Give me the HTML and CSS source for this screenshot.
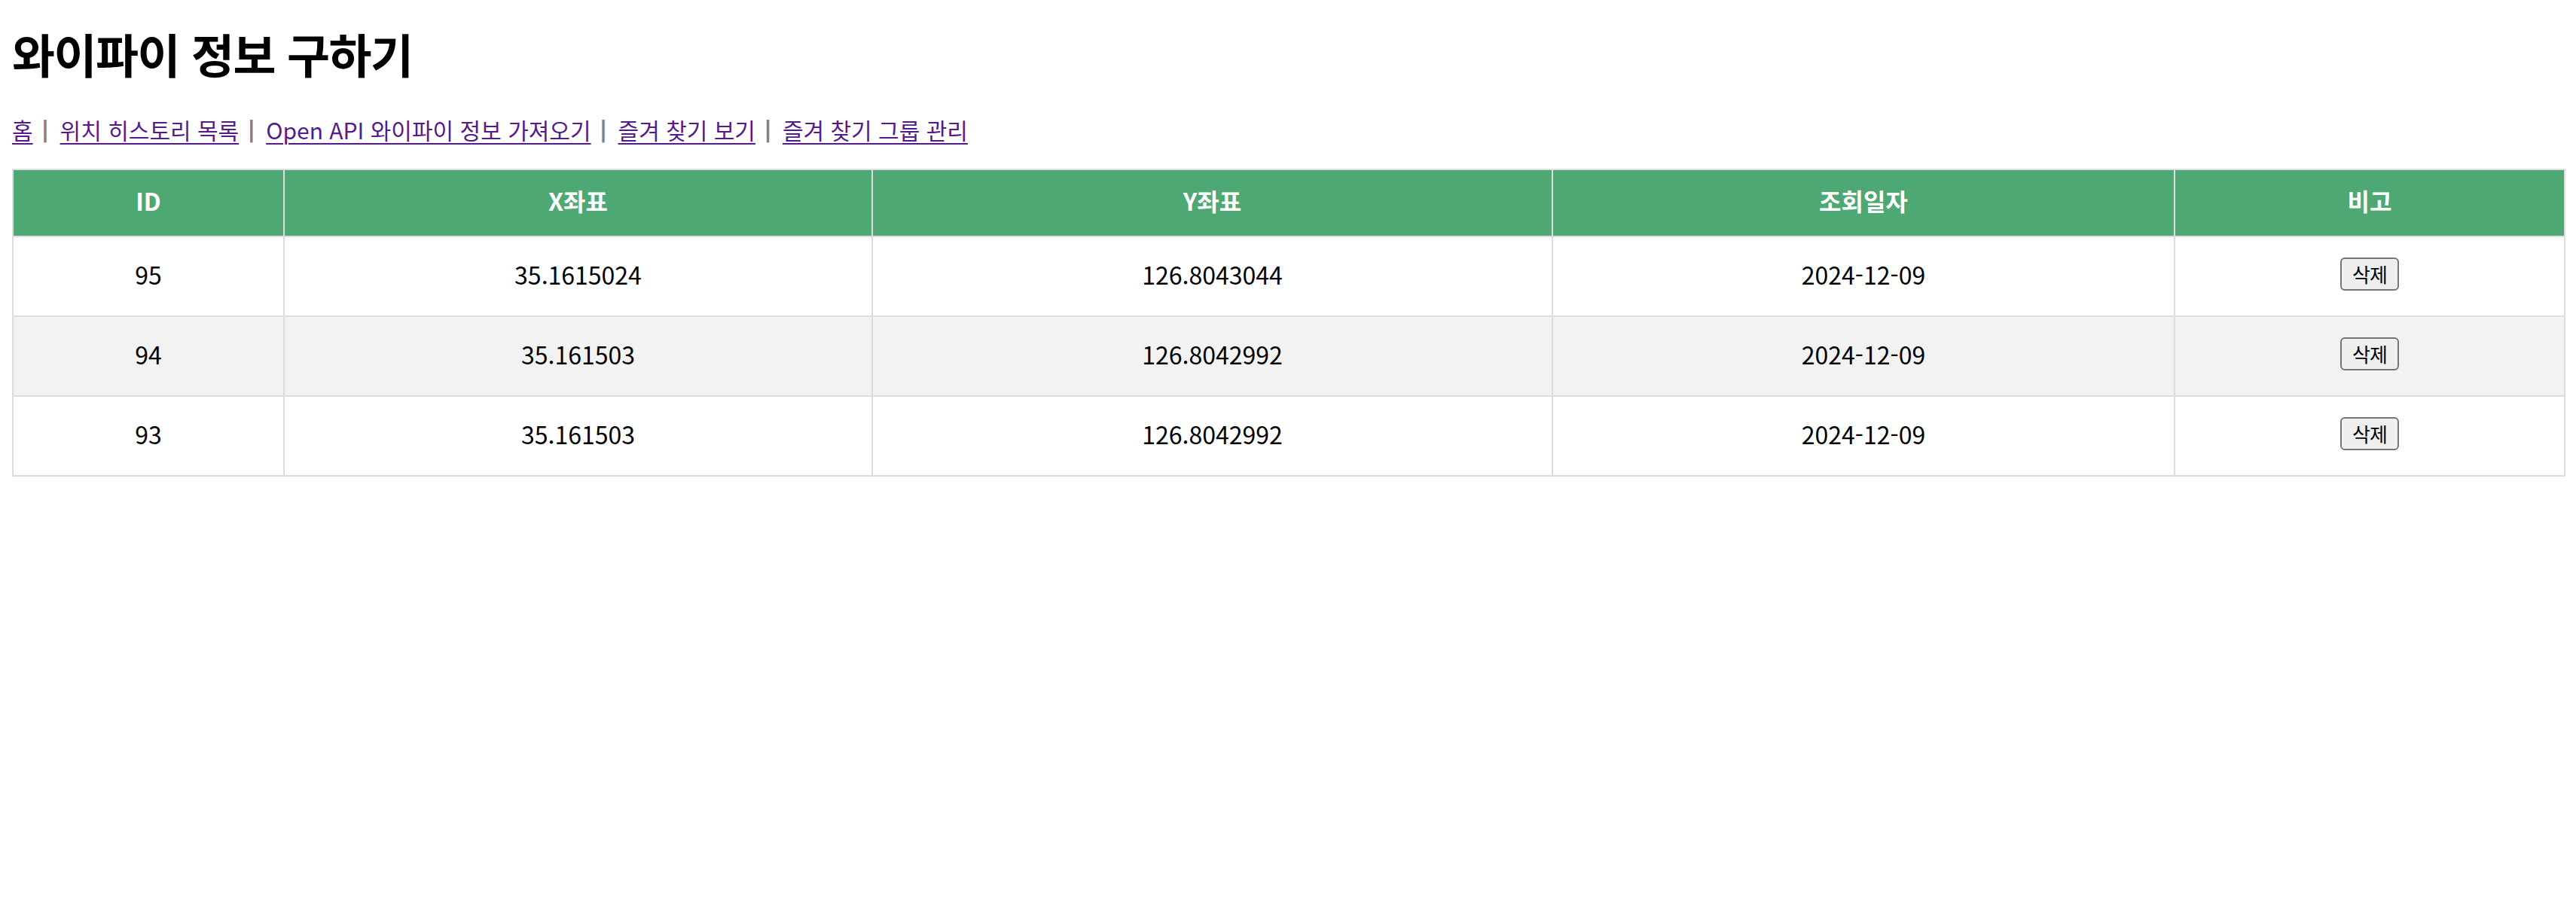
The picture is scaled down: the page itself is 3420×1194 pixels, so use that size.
FILE: index.html
```html
<!DOCTYPE html>
<html lang="ko">
<head>
<meta charset="utf-8">
<title>와이파이 정보 구하기</title>
<link rel="stylesheet" href="styles.css">
</head>
<body>
<h1 class="title">와이파이 정보 구하기</h1>
<nav class="nav">
  <a href="#">홈</a><span class="sep">|</span><a href="#">위치 히스토리 목록</a><span class="sep">|</span><a href="#">Open API 와이파이 정보 가져오기</a><span class="sep">|</span><a href="#">즐겨 찾기 보기</a><span class="sep">|</span><a href="#">즐겨 찾기 그룹 관리</a>
</nav>
<table class="grid">
  <colgroup>
    <col class="c-id">
    <col class="c-x">
    <col class="c-y">
    <col class="c-date">
    <col class="c-note">
  </colgroup>
  <thead>
    <tr><th>ID</th><th>X좌표</th><th>Y좌표</th><th>조회일자</th><th>비고</th></tr>
  </thead>
  <tbody>
    <tr><td>95</td><td>35.1615024</td><td>126.8043044</td><td>2024-12-09</td><td><button class="del" type="button">삭제</button></td></tr>
    <tr><td>94</td><td>35.161503</td><td>126.8042992</td><td>2024-12-09</td><td><button class="del" type="button">삭제</button></td></tr>
    <tr><td>93</td><td>35.161503</td><td>126.8042992</td><td>2024-12-09</td><td><button class="del" type="button">삭제</button></td></tr>
  </tbody>
</table>
</body>
</html>
```

FILE: styles.css
```css
html, body {
  background: #ffffff;
}

body {
  margin: 0;
  padding: 32px 16px 0 16px;
  font-family: "Noto Sans CJK KR", "Noto Sans", sans-serif;
  color: #000000;
}

.title {
  margin: 0;
  font-size: 62px;
  line-height: 78px;
  font-weight: 700;
  letter-spacing: -1.5px;
}

.nav {
  margin: 42px 0 0 0;
  font-size: 30px;
  line-height: 40px;
  display: flex;
  align-items: center;
  flex-wrap: wrap;
}

.nav a {
  color: #551a8b;
  text-decoration: underline;
  text-decoration-thickness: 2px;
  text-underline-offset: 5px;
}

.sep {
  font-family: "DejaVu Sans", sans-serif;
  font-weight: 700;
  font-size: 30px;
  color: #808080;
  margin: 0 14px 0 11px;
}

.grid {
  margin-top: 32px;
  width: 100%;
  border-collapse: collapse;
  table-layout: fixed;
  font-size: 32px;
}

.c-id { width: 360px; }
.c-x { width: 781px; }
.c-y { width: 903px; }
.c-date { width: 826px; }
.c-note { width: 518px; }

.grid th,
.grid td {
  border: 2px solid #dddddd;
  text-align: center;
  vertical-align: middle;
}

.grid th {
  background: #4ea874;
  color: #ffffff;
  font-weight: 700;
  line-height: 39px;
  padding: 21px 16px 27px 16px;
}

.grid td {
  line-height: 44px;
  padding: 27px 16px 33px 16px;
}

.grid tbody tr:nth-child(even) td {
  background: #f2f2f2;
}

.del {
  font-family: "Noto Sans CJK KR", sans-serif;
  font-size: 26px;
  line-height: 36px;
  height: 44px;
  padding: 0 14px;
  background: #efefef;
  border: 2px solid #767676;
  border-radius: 6px;
  color: #000000;
  vertical-align: top;
  letter-spacing: -1px;
}
```
